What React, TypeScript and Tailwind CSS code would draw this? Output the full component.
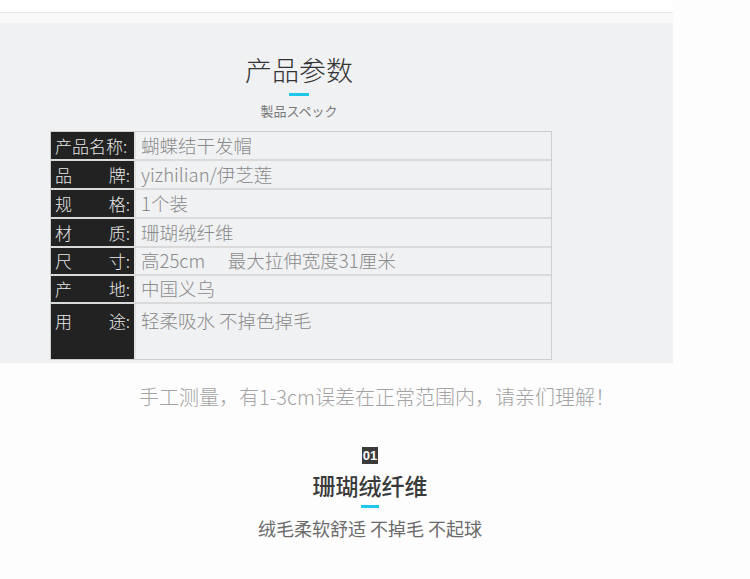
import React from "react";

type Spec = { label: string[]; value: string; h: string };

const specs: Spec[] = [
  { label: ["产品名称:"], value: "蝴蝶结干发帽", h: "h-[29px]" },
  { label: ["品", "牌:"], value: "yizhilian/伊芝莲", h: "h-[29px]" },
  { label: ["规", "格:"], value: "1个装", h: "h-[29px]" },
  { label: ["材", "质:"], value: "珊瑚绒纤维", h: "h-[29px]" },
  { label: ["尺", "寸:"], value: "高25cm\u3000 最大拉伸宽度31厘米", h: "h-[28px]" },
  { label: ["产", "地:"], value: "中国义乌", h: "h-[28px]" },
];

const SpecRow = ({ label, value, h }: Spec) => {
  return (
    <div className={`flex ${h} border-b-2 border-[#dadada]`}>
      <div className="w-[83px] bg-[#222] flex items-center justify-between px-[4px] text-[17px] font-light text-[#e8e8e8]">
        {label.map((l) => (
          <span key={l}>{l}</span>
        ))}
      </div>
      <div className="flex items-center pl-[5px] text-[18.5px] font-light text-[#8a8a8a] border-l-2 border-[#e2e2e2]">
        {value}
      </div>
    </div>
  );
};

const App = () => {
  return (
    <div className="w-[750px] h-[579px] overflow-hidden bg-[#fdfdfd] font-['Noto_Sans_CJK_SC','Noto_Sans',sans-serif]">
      <div className="h-[12px] w-[673px] bg-white" />
      <div className="h-[11px] w-[673px] border-t border-[#e6e6e6] bg-[#f9f9f9]" />

      <section className="w-[673px] h-[340px] bg-[#f0f1f3] pt-[33px]">
        <div className="ml-[50px] w-[502px]">
          <div className="flex flex-col items-center pr-[4px]">
            <h2 className="text-[27px] leading-none font-light text-[#333]">产品参数</h2>
            <div className="mt-[10px] w-[20px] h-[3px] bg-[#1cc7e8]" />
            <p className="mt-[8px] text-[13px] leading-none text-[#777]">製品スペック</p>
          </div>

          <div className="mt-[14px] border border-[#cfcfcf]">
            {specs.map((s) => (
              <SpecRow key={s.value} {...s} />
            ))}
            <div className="flex h-[55px]">
              <div className="w-[83px] bg-[#222] flex justify-between px-[4px] pt-[4px] text-[17px] font-light text-[#e8e8e8]">
                <span>用</span>
                <span>途:</span>
              </div>
              <div className="pl-[5px] pt-[3px] text-[18.5px] font-light text-[#8a8a8a] border-l-2 border-[#e2e2e2]">
                轻柔吸水 不掉色掉毛
              </div>
            </div>
          </div>
        </div>
      </section>

      <p className="mt-[24px] pl-[4px] text-center text-[20px] leading-[20px] font-light text-[#a3a3a3]">
        手工测量，有1-3cm误差在正常范围内，请亲们理解！
      </p>

      <div className="w-[740px] mt-[40px] flex flex-col items-center">
        <span className="w-[16px] h-[17px] bg-[#3b3b3b] text-white text-[13px] leading-[17px] text-center font-bold font-['Liberation_Sans',sans-serif]">
          01
        </span>
        <h3 className="mt-[10px] text-[23px] leading-none text-[#3a3a3a] font-medium">珊瑚绒纤维</h3>
        <div className="mt-[8px] w-[18px] h-[3px] bg-[#1cc7e8]" />
        <p className="mt-[11px] text-[18px] leading-none text-[#6b6b6b]">绒毛柔软舒适 不掉毛 不起球</p>
      </div>
    </div>
  );
};

export default App;
